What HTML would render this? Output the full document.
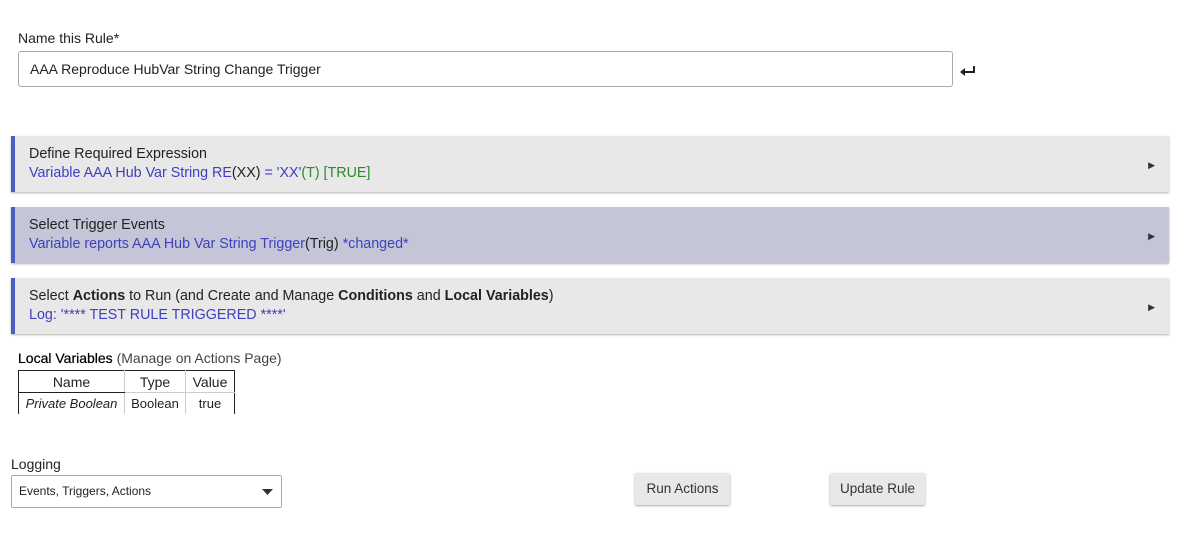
<!DOCTYPE html>
<html><head><style>
body{margin:0;width:1189px;height:534px;background:#fff;font-family:"Liberation Sans",sans-serif;color:#222;position:relative;overflow:hidden}
.a{position:absolute}
.card{position:absolute;left:11px;width:1154px;background:#e8e8e8;border-left:4px solid #4a5fc1;box-shadow:0 1px 2px rgba(0,0,0,.3);font-size:14.3px}
.card .t{position:absolute;left:14px;top:10px;color:#222}
.card .s{position:absolute;left:14px;top:29px;color:#3f3fbf}
.card .ar{position:absolute;right:14px;top:24px;font-size:9px;color:#333}
.g{color:#2a8a2a}.k{color:#222}
table{border-collapse:collapse;font-size:13px}
td{border:1px solid #ccc;text-align:center;padding:0 5px;height:21px}
.btn{position:absolute;background:#e8e8e8;box-shadow:0 1px 2px rgba(0,0,0,.35);font-size:13.5px;color:#333;text-align:center;line-height:32px;border-radius:2px}
</style></head><body>
<div class="a" style="left:18px;top:30px;font-size:14px">Name this Rule*</div>
<div class="a" style="left:18px;top:51px;border:1px solid #aaa;border-radius:3px;font-size:14px;line-height:34px;padding-left:11px;box-sizing:border-box;width:935px;height:36px">AAA Reproduce HubVar String Change Trigger</div>
<svg class="a" style="left:960px;top:66px" width="16" height="10" viewBox="0 0 16 10"><path d="M14 0v6H4" stroke="#222" stroke-width="2" fill="none"/><path d="M0 6l5-4v8z" fill="#222"/></svg>
<div class="card" style="top:136px;height:56px"><div class="t">Define Required Expression</div><div class="s">Variable AAA Hub Var String RE<span class="k">(XX)</span> = 'XX'<span class="g">(T) [TRUE]</span></div><div class="ar">▶</div></div>
<div class="card" style="top:207px;height:56px;background:#c4c5d6"><div class="t">Select Trigger Events</div><div class="s">Variable reports AAA Hub Var String Trigger<span class="k">(Trig)</span> *changed*</div><div class="ar">▶</div></div>
<div class="card" style="top:278px;height:56px"><div class="t">Select <b>Actions</b> to Run (and Create and Manage <b>Conditions</b> and <b>Local Variables</b>)</div><div class="s">Log: '**** TEST RULE TRIGGERED ****'</div><div class="ar">▶</div></div>
<div class="a" style="left:18px;top:350px;font-size:14px"><span style="color:#000;text-shadow:0 0 0.5px #000">Local Variables</span> <span style="color:#444">(Manage on Actions Page)</span></div>
<table class="a" style="left:18px;top:370px">
<tr><td style="border-color:#222 #ccc #222 #222;width:95px;font-size:14px">Name</td><td style="border-top-color:#222;font-size:14px;width:50px">Type</td><td style="border-top-color:#222;border-right-color:#222;font-size:14px;width:38px">Value</td></tr>
<tr><td style="border-left-color:#222;border-bottom:none"><i>Private Boolean</i></td><td style="border-bottom:none">Boolean</td><td style="border-right-color:#222;border-bottom:none">true</td></tr>
</table>
<div class="a" style="left:11px;top:456px;font-size:14px">Logging</div>
<div class="a" style="left:11px;top:475px;width:271px;height:33px;border:1px solid #aaa;border-radius:2px;box-sizing:border-box;font-size:12px;line-height:31px;padding-left:7px">Events, Triggers, Actions<svg style="position:absolute;right:8px;top:13px" width="11" height="6"><path d="M0 0h11L5.5 6z" fill="#333"/></svg></div>
<div class="btn" style="left:635px;top:473px;width:95px">Run Actions</div>
<div class="btn" style="left:830px;top:473px;width:95px">Update Rule</div>
</body></html>
